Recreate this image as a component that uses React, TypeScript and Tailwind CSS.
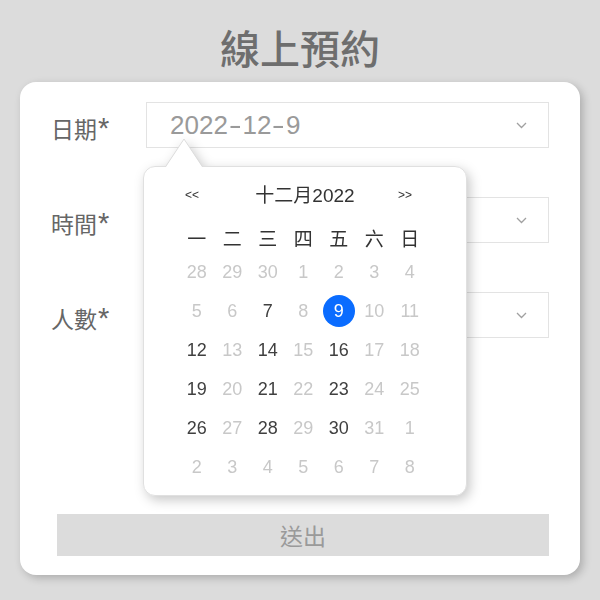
import React from "react";

const FONT = { fontFamily: '"Liberation Sans", "Noto Sans CJK TC", sans-serif' };
const CJK = { fontFamily: '"Noto Sans CJK TC", "Liberation Sans", sans-serif' };
const LAT = { fontFamily: '"Liberation Sans", sans-serif' };

type Day = { n: number; t: "l" | "d" | "s" };
const L = (n: number): Day => ({ n, t: "l" });
const D = (n: number): Day => ({ n, t: "d" });

const rows: Day[][] = [
  [L(28), L(29), L(30), L(1), L(2), L(3), L(4)],
  [L(5), L(6), D(7), L(8), { n: 9, t: "s" }, L(10), L(11)],
  [D(12), L(13), D(14), L(15), D(16), L(17), L(18)],
  [D(19), L(20), D(21), L(22), D(23), L(24), L(25)],
  [D(26), L(27), D(28), L(29), D(30), L(31), L(1)],
  [L(2), L(3), L(4), L(5), L(6), L(7), L(8)],
];

const weekdays = ["一", "二", "三", "四", "五", "六", "日"];

function Chevron() {
  return (
    <svg width="11" height="7" viewBox="0 0 11 7" className="shrink-0">
      <polyline points="1,1 5.5,5.5 10,1" fill="none" stroke="#a0a0a0" strokeWidth="1.3" />
    </svg>
  );
}

function Row({ label, value }: { label: string; value?: React.ReactNode }) {
  return (
    <div className="flex items-center h-[46px]">
      <div className="w-[98px] pt-[6px] pl-[3px] text-[23px] text-[#666666] leading-none" style={CJK}>
        {label}
        <span className="text-[29px] leading-none ml-[1px]" style={LAT}>*</span>
      </div>
      <div className="flex-1 h-full border border-[#e3e3e3] flex items-center pl-[23px] pr-[21px]">
        <div className="flex-1 text-[26px] text-[#9a9a9a] leading-none">{value}</div>
        <Chevron />
      </div>
    </div>
  );
}

export default function App() {
  return (
    <div className="w-full h-[600px] bg-[#dcdcdc] flex flex-col items-center" style={FONT}>
      <div className="h-[82px] pt-[12px] flex items-center justify-center text-[40px] font-medium text-[#6e6e6e] leading-none" style={CJK}>
        線上預約
      </div>
      <div className="relative w-[560px] h-[493px] bg-white rounded-[16px] shadow-[3px_3px_8px_rgba(0,0,0,0.22)] pt-[20px] pl-[28px] pr-[31px] flex flex-col">
        <Row
          label="日期"
          value={
            <span>
              2022<span className="inline-block scale-x-[1.5] mx-[3px]">-</span>12<span className="inline-block scale-x-[1.5] mx-[3px]">-</span>9
            </span>
          }
        />
        <div className="mt-[49px]">
          <Row label="時間" />
        </div>
        <div className="mt-[49px]">
          <Row label="人數" />
        </div>
        <div className="mt-[176px] ml-[9px] h-[42px] bg-[#dcdcdc] flex items-center justify-center text-[23px] text-[#9a9a9a]" style={CJK}>
          送出
        </div>

        {/* Date picker popup */}
        <div className="absolute left-[123px] top-[84px] w-[324px] h-[330px] drop-shadow-[3px_4px_6px_rgba(0,0,0,0.22)]">
          <svg
            width="38"
            height="30"
            viewBox="0 0 38 30"
            className="absolute left-[22px] top-[-28px] z-10"
          >
            <polygon points="0,30 19,1 38,30" fill="#ffffff" />
            <polyline points="0.5,28.8 19,1 37.5,28.8" fill="none" stroke="#dcdcdc" strokeWidth="1" />
          </svg>
          <div className="w-full h-full bg-white rounded-[12px] border border-[#e0e0e0] flex flex-col">
            <div className="mt-[13px] h-[30px] grid grid-cols-[1fr_auto_1fr] items-center text-[#333333]">
              <div className="ml-[41px] text-[12px] leading-none">&lt;&lt;</div>
              <div className="text-[19px] leading-none">十二月2022</div>
              <div className="justify-self-end mr-[54px] text-[12px] leading-none">&gt;&gt;</div>
            </div>
            <div className="mt-[13px] pl-[35px] grid grid-cols-[repeat(7,35.5px)] h-[29px] items-center">
              {weekdays.map((w) => (
                <div key={w} className="text-center text-[19px] text-[#333333] leading-none" style={CJK}>
                  {w}
                </div>
              ))}
            </div>
            {rows.map((r, i) => (
              <div key={i} className="pl-[35px] grid grid-cols-[repeat(7,35.5px)] h-[39px] items-center">
                {r.map((d, j) => (
                  <div key={j} className="flex items-center justify-center">
                    {d.t === "s" ? (
                      <div className="w-[32px] h-[32px] rounded-full bg-[#0a6cff] text-white text-[18px] flex items-center justify-center leading-none">
                        {d.n}
                      </div>
                    ) : (
                      <div
                        className={
                          d.t === "d"
                            ? "text-[18px] text-[#404040] leading-none"
                            : "text-[18px] text-[#c8c8c8] leading-none"
                        }
                      >
                        {d.n}
                      </div>
                    )}
                  </div>
                ))}
              </div>
            ))}
          </div>
        </div>
      </div>
    </div>
  );
}
